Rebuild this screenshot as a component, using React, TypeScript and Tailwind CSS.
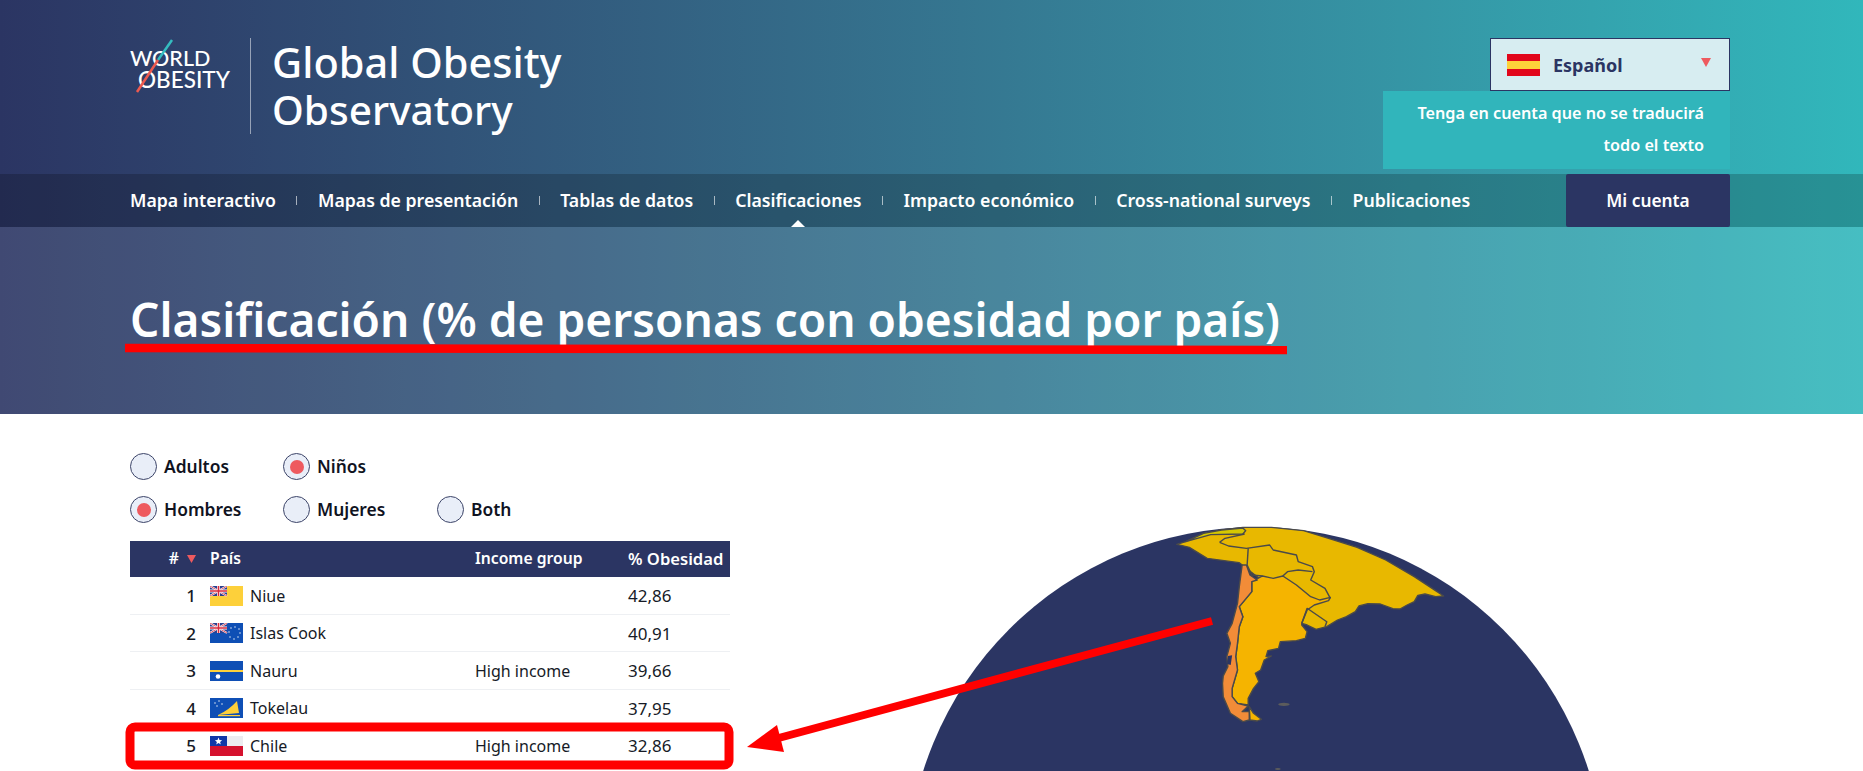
import React from "react";

function UJ({ w = 16, h = 10 }: { w?: number; h?: number }) {
  return (
    <g>
      <rect width={w} height={h} fill="#2b3f8f" />
      <path d={`M0 0L${w} ${h}M${w} 0L0 ${h}`} stroke="#fff" strokeWidth="2" />
      <path d={`M0 0L${w} ${h}M${w} 0L0 ${h}`} stroke="#d8283c" strokeWidth="0.8" />
      <path d={`M${w / 2} 0V${h}M0 ${h / 2}H${w}`} stroke="#fff" strokeWidth="3" />
      <path d={`M${w / 2} 0V${h}M0 ${h / 2}H${w}`} stroke="#d8283c" strokeWidth="1.6" />
    </g>
  );
}

function Flag({ code }: { code: string }) {
  return (
    <svg width="33" height="20" viewBox="0 0 33 20" className="shrink-0">
      {code === "nu" && (
        <>
          <rect width="33" height="20" fill="#fdd03a" />
          <UJ w={17} h={10} />
        </>
      )}
      {code === "ck" && (
        <>
          <rect width="33" height="20" fill="#0f4fb5" />
          <UJ w={17} h={10} />
          {[[25, 4], [29, 6], [30, 10], [28, 14], [24, 16], [20, 14], [19, 9], [21, 5]].map(([x, y]) => (
            <circle key={`${x}-${y}`} cx={x} cy={y} r="0.7" fill="#fff" />
          ))}
        </>
      )}
      {code === "nr" && (
        <>
          <rect width="33" height="20" fill="#0f4fb5" />
          <rect y="9" width="33" height="2" fill="#fdd03a" />
          <circle cx="8" cy="15.5" r="2.3" fill="#fff" />
        </>
      )}
      {code === "tk" && (
        <>
          <rect width="33" height="20" fill="#0f4fb5" />
          <path d="M8 17 Q19 12 27 3 L29 15 L8 17Z" fill="#fdd03a" />
          <rect x="8" y="17" width="22" height="1.2" fill="#fdd03a" />
          {[[5, 5], [9, 3], [12, 6], [7, 8]].map(([x, y]) => (
            <circle key={`${x}-${y}`} cx={x} cy={y} r="0.7" fill="#fff" />
          ))}
        </>
      )}
      {code === "cl" && (
        <>
          <rect width="33" height="10" fill="#ececf0" />
          <rect y="10" width="33" height="10" fill="#d5112e" />
          <rect width="17" height="10" fill="#1038a8" />
          <path d="M8.5 1.6l1 2.5 2.6.1-2 1.7.7 2.6-2.3-1.5-2.3 1.5.7-2.6-2-1.7 2.6-.1z" fill="#fff" />
        </>
      )}
    </svg>
  );
}

function Radio({ label, on, w }: { label: string; on?: boolean; w: string }) {
  return (
    <div className={`flex items-center gap-[7px] ${w}`}>
      <span className="flex h-[27px] w-[27px] items-center justify-center rounded-full border border-[#3c4468] bg-[#e9eef8]">
        {on && <span className="h-[14px] w-[14px] rounded-full bg-[#ee5a5f]" />}
      </span>
      <span className="pb-[2px] text-[17.4px] font-semibold text-[#10131f]">{label}</span>
    </div>
  );
}

const rows = [
  { n: 1, code: "nu", name: "Niue", inc: "", v: "42,86" },
  { n: 2, code: "ck", name: "Islas Cook", inc: "", v: "40,91" },
  { n: 3, code: "nr", name: "Nauru", inc: "High income", v: "39,66" },
  { n: 4, code: "tk", name: "Tokelau", inc: "", v: "37,95" },
  { n: 5, code: "cl", name: "Chile", inc: "High income", v: "32,86" },
];

const nav = [
  "Mapa interactivo",
  "Mapas de presentación",
  "Tablas de datos",
  "Clasificaciones",
  "Impacto económico",
  "Cross-national surveys",
  "Publicaciones",
];

function Globe() {
  const T = "translate(900 510) scale(0.35714 0.33333)";
  return (
    <svg viewBox="900 520 700 251" className="ml-[170px] mt-[106px] h-[251px] w-[700px] shrink-0">
      <circle cx="1256" cy="876" r="349" fill="#2b3563" />
      <g transform={T} stroke="#4a4a4a" strokeWidth="4" strokeLinejoin="round" fill="none">
        <path
          fill="#e8b800"
          d="M775 103L800 95L850 70L900 60L960 52L1040 52L1130 62L1200 85L1280 112L1360 150L1440 200L1490 235L1522 258L1500 260L1470 252L1450 256L1440 275L1420 285L1400 297L1380 296L1345 282L1310 281L1285 288L1275 305L1250 320L1225 330L1195 350L1165 358L1140 345L1125 340L1100 300L1000 200L958 165L950 158L860 145L810 112Z"
        />
        <path fill="#d6c800" d="M800 95L850 70L900 60L960 54L968 62L960 72L870 74Z" />
        <path
          fill="#f5b400"
          d="M985 215L1015 198L1045 205L1072 198L1110 225L1150 260L1175 270L1205 262L1200 272L1160 285L1140 300L1125 340L1125 345L1140 365L1135 385L1110 392L1065 395L1060 415L1030 422L1025 440L1040 438L1020 450L1010 480L995 490L1005 515L990 535L975 565L975 585L945 580L930 560L930 535L945 480L940 440L945 400L950 350L960 320L950 290L985 245Z"
        />
        <path
          fill="#f28c38"
          d="M958 165L970 165L980 195L1000 210L985 215L985 245L950 290L960 320L950 350L945 400L940 440L945 480L930 535L930 560L945 580L975 588L958 605L978 605L978 630L960 635L925 610L905 560L903 520L905 498L918 470L915 440L925 400L915 370L930 340L945 280L950 230Z"
        />
        <path fill="#f5b400" d="M978 590L990 610L1012 628L1000 633L980 630Z" />
        <path d="M895 97L920 108L970 115L1035 105L1045 120L1110 135L1115 155L1155 170L1160 185L1150 210L1190 235L1205 265" />
        <path d="M895 97L910 85L965 72" />
        <path d="M975 115L972 165L985 195L1015 198" />
        <path d="M1072 198L1085 185L1115 180L1155 185" />
        <path d="M1125 340L1140 295L1195 335L1190 350" />
        <path fill="#2b3563" stroke="none" d="M918 438L930 436L926 465L916 462Z" />
      </g>
      <g transform={T} fill="#5c5c5c">
        <ellipse cx="1075" cy="583" rx="16" ry="5" />
        <ellipse cx="1058" cy="777" rx="8" ry="3" />
      </g>
    </svg>
  );
}

export default function App() {
  return (
    <div className="relative h-[771px] overflow-hidden bg-white font-['Noto_Sans',sans-serif]">
      <div className="bg-gradient-to-r from-[#2b3563] to-[#31b7bb]">
        <header className="flex h-[174px] items-start justify-between pl-[130px] pr-[133px] text-white">
          <div className="flex items-start pt-[38px]">
            <div className="relative w-[100px] pt-[8px] font-['Lato',sans-serif] text-[21.5px] font-medium leading-[24px]">
              <div>WORLD</div>
              <div className="-mt-[2px] pl-[8px] text-[22.5px]">OBESITY</div>
              <svg className="absolute left-0 top-0 h-[60px] w-[50px]" viewBox="0 0 50 60">
                <path d="M42 2L28 22" stroke="#35bcc0" strokeWidth="2.5" />
                <path d="M28 22L7 54" stroke="#ee5a4f" strokeWidth="2.5" />
              </svg>
            </div>
            <div className="ml-[20px] h-[96px] w-px bg-white/50" />
            <div className="ml-[21px] font-medium">
              <h1 className="text-[41.5px] leading-[48px]">Global Obesity</h1>
              <div className="text-[40.6px] leading-[48px]">Observatory</div>
            </div>
          </div>
          <div className="flex w-[347px] flex-col items-end pt-[38px]">
            <div className="flex h-[53px] w-[240px] items-center border border-[#2b3563] bg-[#d7edf1] pl-[16px] pr-[18px]">
              <svg width="33" height="22" viewBox="0 0 33 22" className="shrink-0">
                <rect width="33" height="22" fill="#e1061b" />
                <rect y="7" width="33" height="8" fill="#fdd13a" />
              </svg>
              <span className="ml-[13px] flex-1 pt-[1px] text-[18px] font-bold text-[#2b3563]">Español</span>
              <svg width="10" height="9" viewBox="0 0 10 9" className="mb-[4px]">
                <path d="M0 0H10L5 9Z" fill="#ee5a5f" />
              </svg>
            </div>
            <div className="h-[78px] w-[347px] bg-[#31b5bb] pr-[26px] pt-[6px] text-right text-[16.2px] font-semibold leading-[32px] text-white">
              Tenga en cuenta que no se traducirá
              <br />
              todo el texto
            </div>
          </div>
        </header>

        <nav className="flex h-[53px] items-stretch justify-between bg-black/20 pl-[130px] pr-[133px] text-white">
          <div className="flex items-center">
            {nav.map((n, i) => (
              <React.Fragment key={n}>
                {i > 0 && <span className="mx-[20.5px] h-[9px] w-px bg-white/60" />}
                <span className="relative flex h-[53px] items-center text-[17.7px] font-semibold">
                  {n}
                  {n === "Clasificaciones" && (
                    <span className="absolute bottom-0 left-1/2 h-0 w-0 -translate-x-1/2 border-x-[7px] border-b-[7px] border-x-transparent border-b-white" />
                  )}
                </span>
              </React.Fragment>
            ))}
          </div>
          <div className="flex w-[164px] items-center justify-center rounded-[2px] bg-[#2b3563] text-[17.3px] font-semibold">
            Mi cuenta
          </div>
        </nav>

        <section className="flex h-[187px] items-center bg-white/10 pl-[130px]">
          <h2 className="text-[46.1px] font-semibold leading-none text-white">
            Clasificación (% de personas con obesidad por país)
          </h2>
        </section>
      </div>

      <main className="flex items-start pl-[130px]">
        <div className="w-[600px] shrink-0 pt-[38px]">
          <div className="flex h-[30px] items-center">
            <Radio label="Adultos" w="w-[153px]" />
            <Radio label="Niños" on w="w-[154px]" />
          </div>
          <div className="mt-[13px] flex h-[30px] items-center">
            <Radio label="Hombres" on w="w-[153px]" />
            <Radio label="Mujeres" w="w-[154px]" />
            <Radio label="Both" w="w-[100px]" />
          </div>
          <div className="mt-[16px] grid h-[36px] grid-cols-[80px_265px_153px_1fr] items-center bg-[#2b3563] text-[15.7px] font-semibold text-white">
            <div className="flex items-center justify-end gap-[8px] pr-[14px]">
              <span>#</span>
              <svg width="9" height="8" viewBox="0 0 9 8">
                <path d="M0 0H9L4.5 8Z" fill="#ee5a5f" />
              </svg>
            </div>
            <div>País</div>
            <div>Income group</div>
            <div className="text-[16.6px]">% Obesidad</div>
          </div>
          {rows.map((r) => (
            <div
              key={r.n}
              className="grid h-[37.5px] grid-cols-[80px_265px_153px_1fr] items-center border-b border-[#eef0f3] pt-[1px] text-[16px] text-[#161a26]"
            >
              <div className="pr-[14px] text-right text-[17px] font-medium">{r.n}</div>
              <div className="flex items-center gap-[7px]">
                <Flag code={r.code} />
                <span>{r.name}</span>
              </div>
              <div>{r.inc}</div>
              <div className="text-[17px]">{r.v}</div>
            </div>
          ))}
        </div>
        <Globe />
      </main>

      {/* red hand-drawn annotations laid over the page */}
      <svg className="pointer-events-none absolute left-0 top-0 h-[771px] w-[1863px]" viewBox="0 0 1863 771">
        <path d="M125 348L1287 350" stroke="#ff0000" strokeWidth="8.5" />
        <rect x="130" y="727" width="599" height="38" rx="5" fill="none" stroke="#ff0000" strokeWidth="9" />
        <path d="M1212 621L775 739" stroke="#ff0000" strokeWidth="8" />
        <path d="M747 747L777 725L784 752Z" fill="#ff0000" />
      </svg>
    </div>
  );
}
